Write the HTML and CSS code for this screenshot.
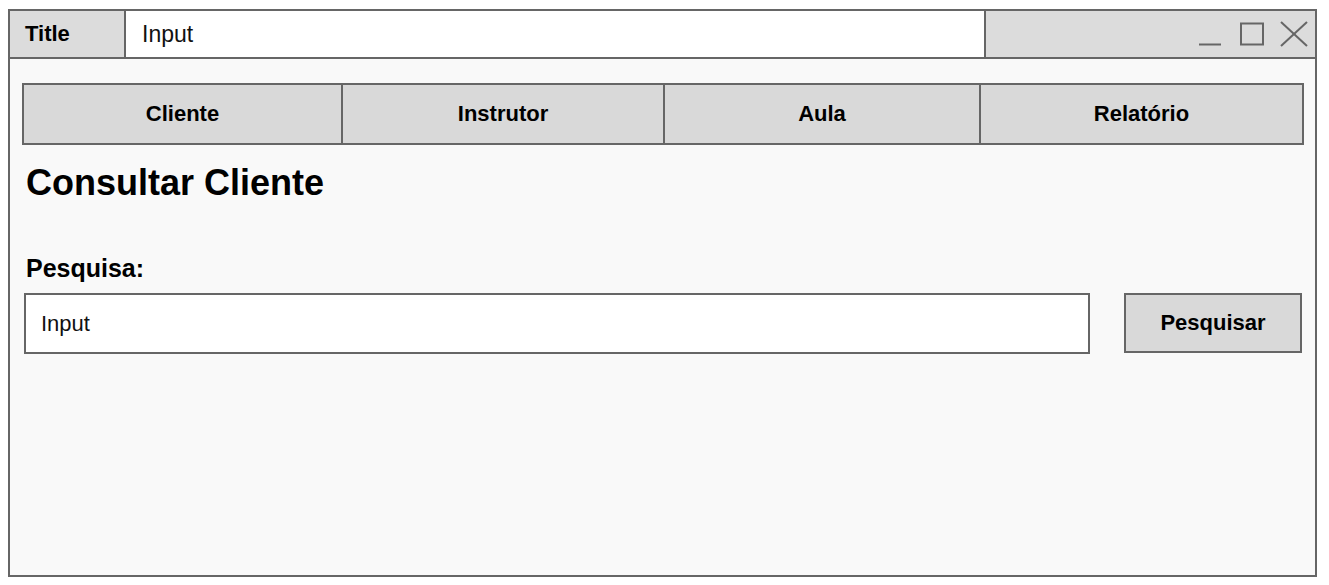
FILE: index.html
```html
<!DOCTYPE html>
<html lang="pt">
<head>
<meta charset="utf-8">
<title>Consultar Cliente</title>
<link rel="stylesheet" href="styles.css">
</head>
<body>
<div class="window">
  <div class="titlebar">
    <div class="title">Title</div>
    <div class="title-input">Input</div>
    <div class="controls">
      <svg class="ctrl-icons" width="120" height="46" viewBox="0 0 120 46">
        <line x1="4" y1="33.5" x2="26" y2="33.5" stroke="#666666" stroke-width="2"/>
        <rect x="46" y="12.5" width="22" height="21" fill="none" stroke="#666666" stroke-width="2"/>
        <line x1="86" y1="11" x2="112" y2="35" stroke="#666666" stroke-width="2"/>
        <line x1="112" y1="11" x2="86" y2="35" stroke="#666666" stroke-width="2"/>
      </svg>
    </div>
  </div>
  <div class="content">
    <nav class="tabs">
      <div class="tab">Cliente</div>
      <div class="tab">Instrutor</div>
      <div class="tab">Aula</div>
      <div class="tab">Relatório</div>
    </nav>
    <h1 class="heading">Consultar Cliente</h1>
    <div class="label">Pesquisa:</div>
    <div class="search-row">
      <div class="search-input">Input</div>
      <div class="search-btn">Pesquisar</div>
    </div>
  </div>
</div>
</body>
</html>
```

FILE: styles.css
```css
* { box-sizing: border-box; }

body {
  margin: 0;
  background: #ffffff;
  font-family: "Liberation Sans", Arial, sans-serif;
  color: #000;
}

.window {
  margin: 9px 0 0 8px;
  width: 1309px;
  height: 568px;
  border: 2px solid #666666;
  background: #f9f9f9;
  display: flex;
  flex-direction: column;
}

.titlebar {
  display: flex;
  height: 48px;
  border-bottom: 2px solid #666666;
  flex: none;
}

.title {
  width: 116px;
  border-right: 2px solid #666666;
  background: #dcdcdc;
  font-weight: bold;
  font-size: 22px;
  padding-left: 15px;
  display: flex;
  align-items: center;
}

.title-input {
  width: 860px;
  border-right: 2px solid #666666;
  background: #ffffff;
  font-size: 23px;
  color: #111;
  padding-left: 16px;
  display: flex;
  align-items: center;
}

.controls {
  flex: 1;
  background: #dcdcdc;
  display: flex;
  justify-content: flex-end;
}

.ctrl-icons { display: block; }

.content {
  padding: 24px 11px 0 12px;
}

.tabs {
  display: grid;
  grid-template-columns: 317px 322px 316px 323px;
  height: 62px;
  border: 2px solid #666666;
  background: #d9d9d9;
}

.tab {
  display: flex;
  align-items: center;
  justify-content: center;
  font-weight: bold;
  font-size: 22px;
}

.tab + .tab { border-left: 2px solid #666666; }

.heading {
  margin: 20px 0 0 4px;
  font-size: 36px;
  line-height: 36px;
  font-weight: bold;
}

.label {
  margin: 55px 0 0 4px;
  font-size: 25px;
  line-height: 25px;
  font-weight: bold;
}

.search-row {
  display: flex;
  align-items: flex-start;
  gap: 34px;
  margin: 12px 0 0 2px;
}

.search-input {
  width: 1066px;
  height: 61px;
  border: 2px solid #666666;
  background: #ffffff;
  font-size: 22px;
  color: #111;
  padding-left: 15px;
  display: flex;
  align-items: center;
}

.search-btn {
  width: 178px;
  height: 60px;
  border: 2px solid #666666;
  background: #d9d9d9;
  font-size: 22px;
  font-weight: bold;
  display: flex;
  align-items: center;
  justify-content: center;
}
```
